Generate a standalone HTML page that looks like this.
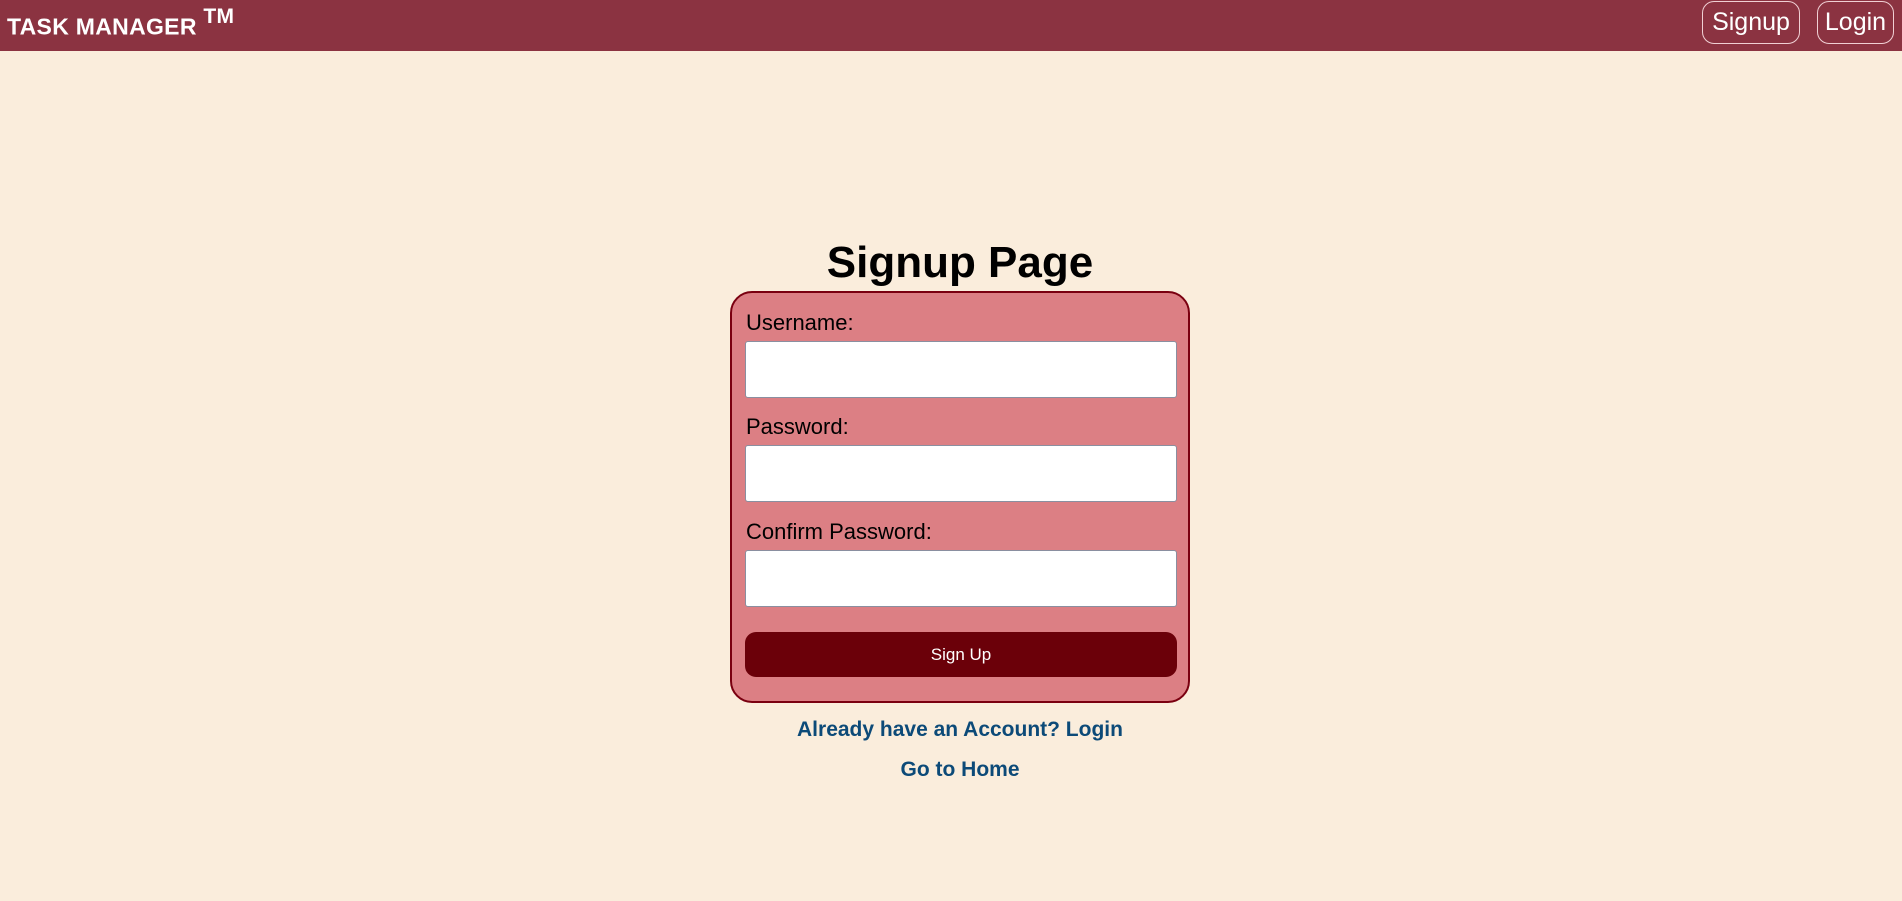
<!DOCTYPE html>
<html><head><meta charset="utf-8"><style>
*{box-sizing:border-box;margin:0;padding:0}
body{width:1902px;height:901px;background:#faeddc;font-family:"Liberation Sans",sans-serif;position:relative;overflow:hidden}
.nav{position:absolute;left:0;top:0;width:1902px;height:51px;background:#8b3341}
.brand{position:absolute;left:7px;top:8px;color:#fff;font-weight:bold;font-size:23px;letter-spacing:0.3px}
.brand sup{font-size:21px;position:relative;top:-3px}
.nb{position:absolute;top:1px;height:43px;border:1px solid #f0d0d4;border-radius:12px;color:#fff;font-size:25px;display:flex;align-items:center;justify-content:center}
h1{position:absolute;left:0;width:1920px;top:238px;text-align:center;font-size:44px;font-weight:bold;color:#000}
.card{position:absolute;left:730px;top:291px;width:460px;height:412px;background:#dc7f84;border:2px solid #7a0010;border-radius:22px}
.lbl{position:absolute;left:14px;font-size:22px;color:#000}
.in{position:absolute;left:13px;width:432px;height:57px;background:#fff;border:1px solid #8a8fa0;border-radius:3px}
.btn{position:absolute;left:13px;top:339px;width:432px;height:45px;background:#6b0009;border-radius:11px;color:#fff;font-size:17px;display:flex;align-items:center;justify-content:center}
.lk{position:absolute;left:0;width:1920px;text-align:center;color:#0c4a78;font-weight:bold;font-size:21px}
</style></head><body>
<div class="nav">
<div class="brand">TASK MANAGER <sup>TM</sup></div>
<div class="nb" style="left:1702px;width:98px">Signup</div>
<div class="nb" style="left:1817px;width:77px">Login</div>
</div>
<h1>Signup Page</h1>
<div class="card">
<div class="lbl" style="top:17px">Username:</div>
<div class="in" style="top:48px"></div>
<div class="lbl" style="top:121px">Password:</div>
<div class="in" style="top:152px"></div>
<div class="lbl" style="top:226px">Confirm Password:</div>
<div class="in" style="top:257px"></div>
<div class="btn">Sign Up</div>
</div>
<div class="lk" style="top:718px">Already have an Account? Login</div>
<div class="lk" style="top:758px">Go to Home</div>
</body></html>
